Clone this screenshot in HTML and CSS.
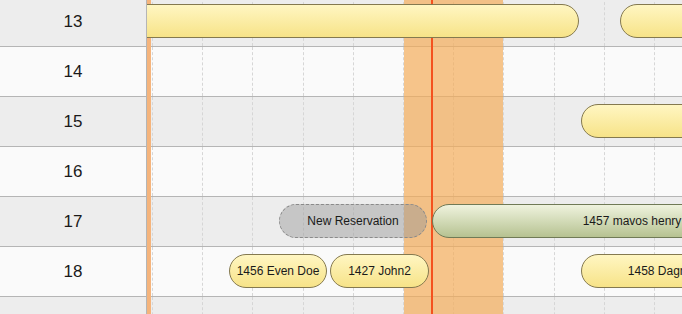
FILE: index.html
```html
<!DOCTYPE html>
<html lang="en">
<head>
    <meta charset="UTF-8">
    <meta name="viewport" content="width=device-width, initial-scale=1.0">
    <title>Reservations</title>

    <link rel="stylesheet" href="styles.css">
</head>
<body>
    <div id="scheduler">
        <div class="row odd">
            <div class="label">13</div>
            <div class="lane">
                <span></span><span></span><span></span><span></span><span></span><span></span><span></span><span></span><span></span><span></span><span></span>
                <div class="bar" style="left:-200px;width:632px"></div>
                <div class="bar" style="left:473px;width:300px"></div>
            </div>
        </div>
        <div class="row">
            <div class="label">14</div>
            <div class="lane">
                <span></span><span></span><span></span><span></span><span></span><span></span><span></span><span></span><span></span><span></span><span></span>
            </div>
        </div>
        <div class="row odd">
            <div class="label">15</div>
            <div class="lane">
                <span></span><span></span><span></span><span></span><span></span><span></span><span></span><span></span><span></span><span></span><span></span>
                <div class="bar" style="left:434px;width:300px"></div>
            </div>
        </div>
        <div class="row">
            <div class="label">16</div>
            <div class="lane">
                <span></span><span></span><span></span><span></span><span></span><span></span><span></span><span></span><span></span><span></span><span></span>
            </div>
        </div>
        <div class="row odd">
            <div class="label">17</div>
            <div class="lane">
                <span></span><span></span><span></span><span></span><span></span><span></span><span></span><span></span><span></span><span></span><span></span>
                <div class="bar nova" style="left:132px;width:148px">New Reservation</div>
                <div class="bar pago" style="left:285px;width:400px">1457 mavos henry</div>
            </div>
        </div>
        <div class="row">
            <div class="label">18</div>
            <div class="lane">
                <span></span><span></span><span></span><span></span><span></span><span></span><span></span><span></span><span></span><span></span><span></span>
                <div class="bar" style="left:82px;width:98px">1456 Even Doe</div>
                <div class="bar" style="left:183px;width:99px">1427 John2</div>
                <div class="bar" style="left:434px;width:203px">1458 Dagny Hansen</div>
            </div>
        </div>
        <div class="row odd">
            <div class="label"></div>
            <div class="lane">
                <span></span><span></span><span></span><span></span><span></span><span></span><span></span><span></span><span></span><span></span><span></span>
            </div>
        </div>

        <div id="faixa"></div>
        <div id="hoje"></div>
        <div id="agora"></div>
    </div>
</body>
</html>
```

FILE: styles.css
```css
body{
    margin: 0;
    overflow: hidden;
    background: #fafafa;
    font-family: "Liberation Sans", Arial, sans-serif;
    color: #1a1a1a;
}

#scheduler{
    position: relative;
    margin-top: -3px;
    height: 320px;
    overflow: hidden;
}

.row{
    display: flex;
    height: 50px;
    box-sizing: border-box;
    border-bottom: 1px solid #b5b5b5;
    background: #fafafa;
}

.row.odd{
    background: #ededed;
}

.label{
    width: 146px;
    flex: none;
    border-right: 1px solid #b5b5b5;
    display: flex;
    align-items: center;
    justify-content: center;
    font-size: 17px;
}

.lane{
    flex: 1;
    position: relative;
    overflow: hidden;
    display: grid;
    grid-template-columns: repeat(11, 50.2px);
    padding-left: 5px;
}

.lane span{
    border-left: 1px dashed #d6d6d6;
}

.bar{
    position: absolute;
    z-index: 2;
    top: 7px;
    height: 34px;
    box-sizing: border-box;
    border: 1px solid #84794f;
    border-radius: 17px;
    background: linear-gradient(#fff6c2, #f7e388);
    font-size: 12px;
    line-height: 32px;
    text-align: center;
    white-space: nowrap;
    overflow: hidden;
}

.bar.nova{
    border: 1px dashed #8a8a8a;
    background: rgba(150, 150, 150, 0.45);
}

.bar.pago{
    border-color: #707a56;
    background: linear-gradient(#eff3de, #b6c291);
}

#faixa,#hoje,#agora{
    position: absolute;
    z-index: 1;
    top: 0;
    bottom: 0;
}

#faixa{
    left: 147px;
    width: 4px;
    background: #f5b47c;
}

#hoje{
    left: 404px;
    width: 99px;
    background: rgba(243, 173, 90, 0.7);
}

#agora{
    left: 431px;
    width: 2px;
    background: #f4511e;
}
```
